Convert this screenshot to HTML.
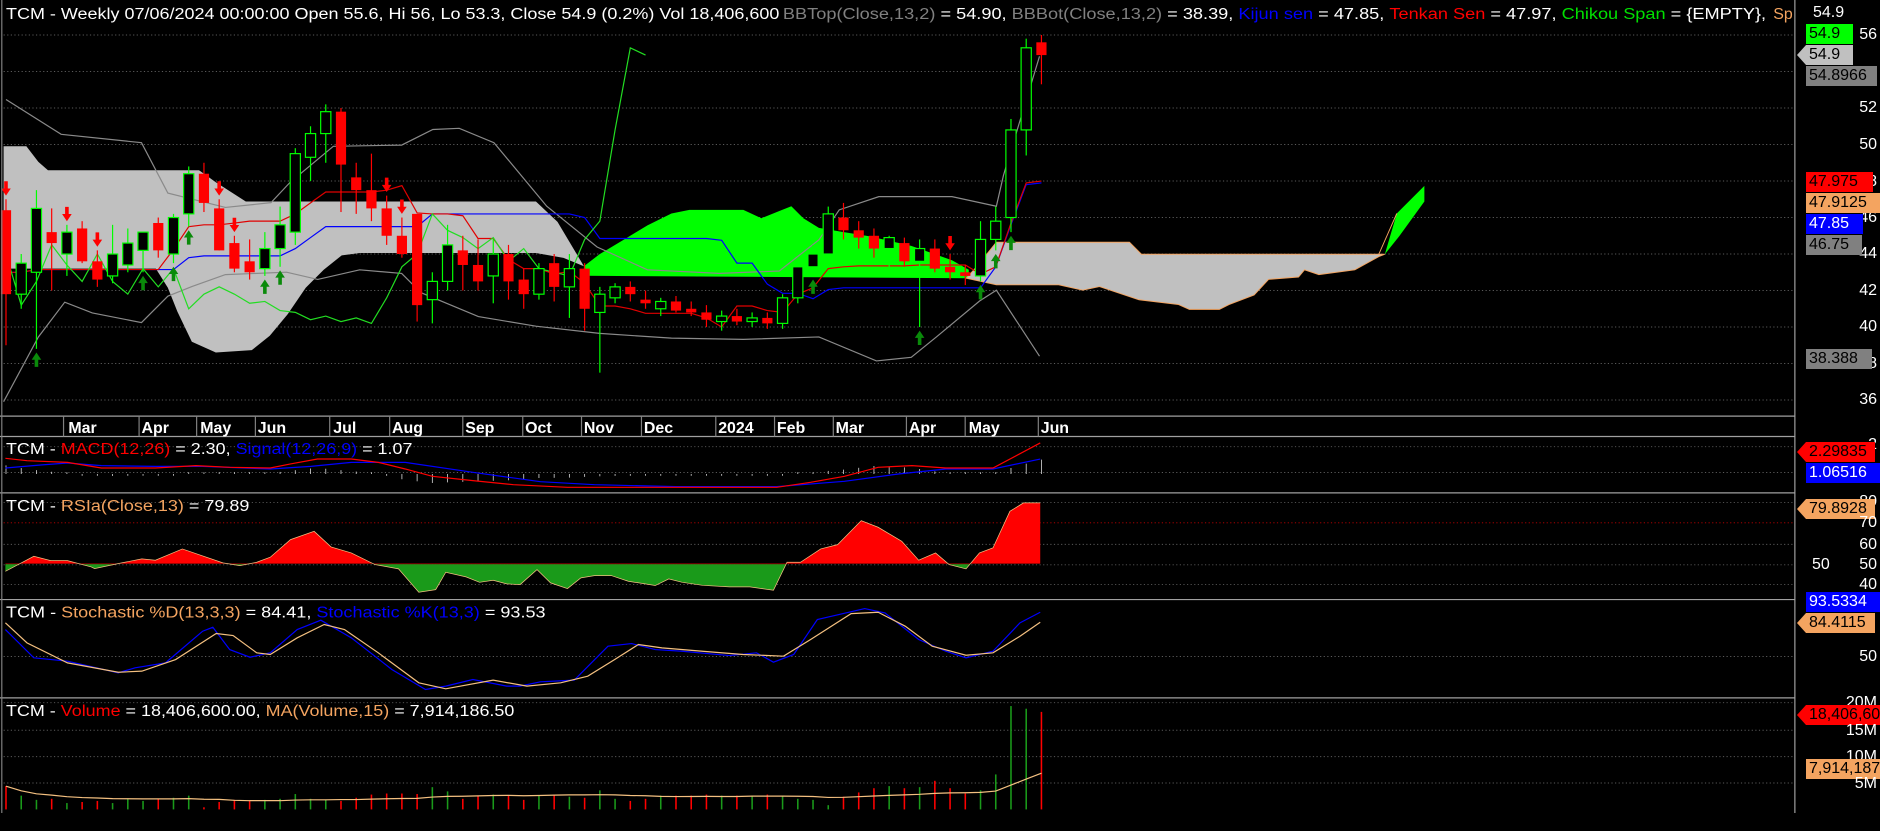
<!DOCTYPE html>
<html><head><meta charset="utf-8">
<style>
html,body{margin:0;padding:0;background:#000;width:1880px;height:831px;overflow:hidden;font-family:"Liberation Sans",Arial,sans-serif;}
#c{position:absolute;left:0;top:0;}
.ax{position:absolute;color:#fff;font-size:16px;line-height:20px;height:20px;}
.r{right:3px;text-align:right}
.bx{position:absolute;left:1806px;height:20px;line-height:20px;font-size:16px;color:#000;padding-left:3px;white-space:nowrap;overflow:hidden}
.ar{left:1797px;padding-left:12px;clip-path:polygon(0 50%,9px 0,100% 0,100% 100%,9px 100%)}
</style></head><body>
<svg id="c" width="1880" height="831" viewBox="0 0 1568 693" preserveAspectRatio="none" xmlns="http://www.w3.org/2000/svg">
<defs>
<clipPath id="up"><rect x="0" y="411" width="1497" height="59.5"/></clipPath>
<clipPath id="dn"><rect x="0" y="470.5" width="1497" height="29"/></clipPath>
<clipPath id="hd"><rect x="0" y="0" width="1497" height="30"/></clipPath>
</defs>
<g id="g"></g>
<g font-family="Liberation Sans, Arial, sans-serif" font-size="13.3" fill="#fff">
<g clip-path="url(#hd)">
<text x="5" y="16" textLength="645" lengthAdjust="spacingAndGlyphs">TCM - Weekly 07/06/2024 00:00:00 Open 55.6, Hi 56, Lo 53.3, Close 54.9 (0.2%) Vol 18,406,600</text>
<text x="653" y="16" textLength="820" lengthAdjust="spacingAndGlyphs"><tspan fill="#808080">BBTop(Close,13,2)</tspan> = 54.90, <tspan fill="#808080">BBBot(Close,13,2)</tspan> = 38.39, <tspan fill="#0000ff">Kijun sen</tspan> = 47.85, <tspan fill="#ff0000">Tenkan Sen</tspan> = 47.97, <tspan fill="#00e000">Chikou Span</tspan> = {EMPTY},</text>
<text x="1479" y="16" fill="#f4a460">Sp</text>
</g>
<g font-weight="bold">
<text x="57" y="361">Mar</text><text x="118" y="361">Apr</text><text x="167" y="361">May</text><text x="215" y="361">Jun</text>
<text x="278" y="361">Jul</text><text x="327" y="361">Aug</text><text x="388" y="361">Sep</text><text x="438" y="361">Oct</text>
<text x="487" y="361">Nov</text><text x="537" y="361">Dec</text><text x="599" y="361">2024</text><text x="648" y="361">Feb</text>
<text x="697" y="361">Mar</text><text x="758" y="361">Apr</text><text x="808" y="361">May</text><text x="868" y="361">Jun</text>
</g>
<text x="5" y="378.5" textLength="339" lengthAdjust="spacingAndGlyphs">TCM - <tspan fill="#ff0000">MACD(12,26)</tspan> = 2.30, <tspan fill="#0000ff">Signal(12,26,9)</tspan> = 1.07</text>
<text x="5" y="426" textLength="203" lengthAdjust="spacingAndGlyphs">TCM - <tspan fill="#f4a460">RSIa(Close,13)</tspan> = 79.89</text>
<text x="5" y="515" textLength="450" lengthAdjust="spacingAndGlyphs">TCM - <tspan fill="#f4a460">Stochastic %D(13,3,3)</tspan> = 84.41, <tspan fill="#0000ff">Stochastic %K(13,3)</tspan> = 93.53</text>
<text x="5" y="597" textLength="424" lengthAdjust="spacingAndGlyphs">TCM - <tspan fill="#ff0000">Volume</tspan> = 18,406,600.00, <tspan fill="#f4a460">MA(Volume,15)</tspan> = 7,914,186.50</text>
</g>
</svg>

<div class="ax" style="left:1813px;top:3px">54.9</div>
<div class="ax r" style="top:25px">56</div>
<div class="ax r" style="top:98px">52</div>
<div class="ax r" style="top:135px">50</div>
<div class="ax r" style="top:172px">48</div>
<div class="ax r" style="top:208px">46</div>
<div class="ax r" style="top:244px">44</div>
<div class="ax r" style="top:281px">42</div>
<div class="ax r" style="top:317px">40</div>
<div class="ax r" style="top:354px">38</div>
<div class="ax r" style="top:390px">36</div>
<div class="bx" style="top:24px;width:44px;background:#00ff00">54.9</div>
<div class="bx ar" style="top:45px;width:44px;background:#c0c0c0">54.9</div>
<div class="bx" style="top:66px;width:68px;background:#808080">54.8966</div>
<div class="bx" style="top:172px;width:64px;background:#ff0000">47.975</div>
<div class="bx" style="top:193px;width:72px;background:#f4a460">47.9125</div>
<div class="bx" style="top:214px;width:54px;background:#0000ff;color:#fff">47.85</div>
<div class="bx" style="top:235px;width:53px;background:#808080">46.75</div>
<div class="bx" style="top:349px;width:63px;background:#808080">38.388</div>

<div class="ax r" style="top:435px">2</div>
<div class="bx ar" style="top:442px;width:66px;background:#ff0000">2.29835</div>
<div class="bx" style="top:463px;width:71px;background:#0000ff;color:#fff">1.06516</div>

<div class="ax r" style="top:492px">80</div>
<div class="bx ar" style="top:499px;width:66px;background:#f4a460">79.8928</div>
<div class="ax r" style="top:513px">70</div>
<div class="ax r" style="top:535px">60</div>
<div class="ax" style="left:1812px;top:555px">50</div>
<div class="ax r" style="top:555px">50</div>
<div class="ax r" style="top:575px">40</div>
<div class="bx" style="top:592px;width:71px;background:#0000ff;color:#fff">93.5334</div>
<div class="bx ar" style="top:613px;width:66px;background:#f4a460">84.4115</div>
<div class="ax r" style="top:647px">50</div>
<div class="ax r" style="top:693px">20M</div>
<div class="bx ar" style="top:705px;width:74px;background:#ff0000">18,406,60</div>
<div class="ax r" style="top:721px">15M</div>
<div class="ax r" style="top:747px">10M</div>
<div class="bx" style="top:759px;width:71px;background:#f4a460">7,914,187</div>
<div class="ax r" style="top:774px">5M</div>

<script>
const D=[[46.4,47,39,41.8],[41.8,44,41,43.5],[43,47.5,38.8,46.5],[45.2,46.5,42,44.6],[44,45.6,42.8,45.2],[45.4,45.8,43.5,43.6],[43.6,44.2,42.2,42.6],[42.8,45.6,42.4,44],[43.4,45.4,43,44.6],[44.2,45,43,45.2],[45.7,46,43.8,44.2],[44,46.2,43.5,46],[46.2,48.8,45.5,48.4],[48.4,49,46.3,46.8],[46.5,47,44.2,44.2],[44.6,45,43,43.2],[43.6,44.8,42.6,43],[43.2,45.2,42.8,44.3],[44.3,46.6,43.3,45.6],[45.2,49.8,44.5,49.5],[49.3,51,48,50.6],[50.6,52.2,49,51.8],[51.8,52,46.3,48.9],[48.2,49,46.2,47.5],[47.5,49.5,45.8,46.5],[46.5,47.2,44.5,45],[45,46,43.8,44],[46.2,46.2,40.3,41.2],[41.5,43,40.2,42.5],[42.5,45.6,42,44.5],[44.2,45,42,43.4],[43.4,44.8,42,42.5],[42.8,44.8,41.3,44],[44,44.5,41.5,42.5],[42.6,43.2,41,41.8],[41.8,43.5,41.5,43.2],[43.5,44,41.4,42.2],[42.2,44,40.5,43.2],[43.2,43.5,39.8,41],[40.8,42.2,37.5,41.8],[41.6,42.4,41.3,42.2],[42.2,42.5,41.4,41.8],[41.5,42,41,41.3],[41,41.6,40.6,41.4],[41.4,41.7,40.8,40.9],[41,41.4,40.6,40.8],[40.8,41.2,40,40.4],[40.3,40.9,39.8,40.6],[40.6,41,40.1,40.3],[40.3,40.8,40,40.5],[40.5,40.8,39.9,40.2],[40.2,41.8,39.9,41.6],[41.6,43.8,41.3,43.3],[43.3,44.5,42.8,44],[44,46.6,43.6,46.2],[46,46.8,44.8,45.3],[45.3,45.8,44.3,44.9],[45,45.4,43.8,44.3],[44.3,45,42.8,44.9],[44.6,44.9,43.3,43.6],[43.6,44.8,40,44.3],[44.3,44.8,43,43.2],[43.3,44,42.6,43],[43,43.4,42.3,42.8],[42.8,45.8,42.5,44.8],[44.8,46.6,44.2,45.8],[46,51.4,45.2,50.8],[50.8,55.8,49.4,55.3],[55.6,56,53.3,54.9]];
const N=D.length,X=i=>5+i*12.7,Y=p=>29.2+(56-p)*15.22;
let s='';
const L=(x1,y1,x2,y2,c,w,da)=>`<line x1="${x1}" y1="${y1}" x2="${x2}" y2="${y2}" stroke="${c}" stroke-width="${w||1}"${da?` stroke-dasharray="${da}"`:''}/>`;
const PL=(pts,c,w)=>`<polyline fill="none" stroke="${c}" stroke-width="${w||1}" points="${pts.map(p=>p[0].toFixed(1)+','+p[1].toFixed(1)).join(' ')}"/>`;
const PG=(pts,c,st)=>`<polygon fill="${c}" ${st||''} points="${pts.map(p=>p.join(',')).join(' ')}"/>`;
// zoom-coordinate converter (crop x0=0,w=1060 displayed 1568 wide; y = y0 + Y/3)
const Z=(pts,y0)=>pts.map(p=>[p[0]*0.5634,(y0+p[1]/3)/1.2]);
const interp=(pts,x)=>{for(let k=1;k<pts.length;k++){if(x<=pts[k][0]){const a=pts[k-1],b=pts[k];const t=(x-a[0])/((b[0]-a[0])||1);return a[1]+t*(b[1]-a[1]);}}return pts[pts.length-1][1];};
// grids
for(let p=36;p<=56;p+=2)s+=L(3,Y(p),1497,Y(p),'#5a5a5a',0.8,'1 2');
[372.5,394,419,454,471,487.5,547.5,586,609,631,653].forEach(y=>s+=L(3,y,1497,y,'#5a5a5a',0.8,'1 2'));
s+=L(3,436,1497,436,'#c00000',0.8,'1 2');
// clouds
s+=PG([[3,122],[22,122],[32,135],[40,142],[166,142],[180,152],[205,168],[447,168],[465,185],[487,222],[470,215],[447,211],[300,211],[285,213],[270,225],[255,240],[240,262],[225,280],[210,292],[180,294],[160,285],[148,260],[140,240],[130,224],[3,224]],'#c0c0c0');
s+=PG([[487,222],[500,212],[520,200],[540,188],[560,178],[575,175],[620,175],[635,182],[650,176],[660,172],[670,182],[683,190],[700,193],[725,197],[760,205],[794,217],[808,225],[808,232],[487,230]],'#00ff00');
s+=PG([[806,232],[815,222],[831,202],[942,202],[952,212],[1150,212],[1155,212],[1150,214],[1130,225],[1100,229],[1088,225],[1083,231],[1058,233],[1046,246],[1025,254],[1017,258],[992,258],[983,254],[950,250],[917,239],[903,242],[883,237.5],[831,237.5]],'#c0c0c0','stroke="#f4a460" stroke-width="0.8"');
s+=PG([[1155,212],[1165,178],[1188,155],[1188,168],[1167,197]],'#00ff00');
s+=L(1150,212,1165,178,'#f4a460',0.8);
// BB
s+=PL([[5,83],[51,112],[118,119],[140,161],[188,173],[226,169],[242,152],[278,122],[335,121],[361,108],[383,107],[412,119],[456,172],[498,206],[540,225],[600,228],[650,226],[683,200],[700,175],[733,164],[794,164],[831,172],[837,146],[850,103],[867,47]],'#8a8a8a');
s+=PL([[3,335],[32,281],[54,252],[77,261],[118,269],[140,247],[160,239],[188,229],[239,227],[265,233],[300,225],[335,228],[351,244],[399,264],[447,272],[500,278],[560,282],[620,283],[683,281],[731,301],[760,298],[781,281],[817,251],[831,242],[867,297]],'#8a8a8a');
// tenkan/kijun/chikou
const mid=(i,n)=>{let h=-1e9,l=1e9;for(let j=Math.max(0,i-n+1);j<=i;j++){h=Math.max(h,D[j][1]);l=Math.min(l,D[j][2]);}return (h+l)/2;};
let tk=[],kj=[],ck=[];
for(let i=0;i<N;i++){tk.push([X(i),Y(mid(i,9))]);kj.push([X(i),Y(mid(i,26))]);if(i>=26)ck.push([X(i-26),Y(D[i][3])]);}
s+=PL(kj,'#0000ff');s+=PL(tk,'#e00000');s+=PL(ck,'#22dd22');
// candles
D.forEach((d,i)=>{const x=X(i),up=d[3]>=d[0],c=up?'#00ff00':'#ff0000';
 s+=L(x,Y(d[1]),x,Y(d[2]),c,1);
 const t=Y(Math.max(d[0],d[3])),b=Y(Math.min(d[0],d[3]));
 s+=`<rect x="${x-4.25}" y="${t}" width="8.5" height="${Math.max(1.5,b-t)}" fill="${up?'#000':'#ff0000'}" stroke="${c}" stroke-width="${up?1:0}"/>`;});
// arrows
const ua=(i)=>{const x=X(i),y=Y(D[i][2])+3;s+=PG([[x,y],[x-4,y+6],[x-1.5,y+6],[x-1.5,y+12],[x+1.5,y+12],[x+1.5,y+6],[x+4,y+6]],'#0a8a0a');};
const da=(i)=>{const x=X(i),y=Y(D[i][1])-3;s+=PG([[x,y],[x-4,y-6],[x-1.5,y-6],[x-1.5,y-12],[x+1.5,y-12],[x+1.5,y-6],[x+4,y-6]],'#ff0000');};
[2,9,11,12,17,18,53,60,64,65,66].forEach(ua);[0,4,6,14,15,25,26,62].forEach(da);
// dividers
[347,364,411,500,582].forEach(y=>s+=L(0,y,1497,y,'#a0a0a0',1));
s+=L(1497,0,1497,678,'#a0a0a0',1);s+=L(1.5,0,1.5,678,'#808080',1);
[53,116,164,213,275,325,386,436,485,535,597,646,695,756,805,866].forEach(x=>s+=L(x,347,x,364,'#808080',1));
// MACD (hand traced)
const mR=Z([[8,68],[40,75],[100,80],[150,97],[230,97],[290,90],[340,95],[400,97],[430,85],[470,70],[520,70],[560,80],[600,100],[640,122],[700,135],[760,147],[840,155],[1000,155],[1150,155],[1200,140],[1250,122],[1300,95],[1350,90],[1400,97],[1470,97],[1540,22]],436);
const mB=Z([[8,97],[60,88],[100,82],[150,90],[230,92],[300,92],[400,100],[460,92],[520,80],[600,80],[700,110],[800,138],[880,147],[1000,153],[1150,153],[1250,137],[1330,115],[1400,100],[1470,100],[1540,70]],436);
const z0=(436+115/3)/1.2;
for(let i=0;i<N;i++){const x=X(i);let h=(interp(mB,x)-interp(mR,x))*0.9;if(Math.abs(h)<1.5)h=h<0?-1.5:1.5;s+=L(x,z0,x,z0-h,'#d0d0d0',0.7);}
s+=PL(mB,'#0000ff');s+=PL(mR,'#ff0000');
// RSI (hand traced)
const rP=Z([[8,245],[50,200],[75,213],[100,213],[135,232],[140,237],[180,220],[210,208],[230,212],[270,178],[330,220],[355,228],[380,218],[400,203],[430,150],[465,125],[490,172],[520,190],[555,225],[590,238],[620,308],[645,300],[660,248],[690,262],[710,278],[730,272],[750,283],[770,285],[795,240],[815,280],[840,297],[860,265],[880,258],[905,258],[930,275],[970,288],[990,268],[1010,278],[1040,287],[1080,292],[1110,292],[1145,302],[1165,218],[1185,218],[1215,178],[1240,165],[1275,93],[1300,113],[1335,155],[1360,212],[1385,190],[1405,225],[1430,238],[1450,190],[1470,175],[1495,65],[1515,40],[1540,40]],490);
const base=(490+222/3)/1.2;
const rp=[[rP[0][0],base]].concat(rP,[[rP[rP.length-1][0],base]]);
const rps=rp.map(p=>p[0].toFixed(1)+','+p[1].toFixed(1)).join(' ');
s+=`<polygon clip-path="url(#up)" fill="#ff0000" points="${rps}"/><polygon clip-path="url(#dn)" fill="#1a9a1a" points="${rps}"/>`;
s+=PL(rP,'#f4c080',0.6);
// Stoch (hand traced)
const sK=Z([[8,420],[50,505],[100,515],[175,550],[200,535],[245,520],[300,425],[315,413],[340,480],[370,503],[400,490],[440,420],[475,392],[520,445],[580,540],[630,600],[660,590],[700,570],[750,590],[770,590],[800,577],[850,572],[900,470],[935,462],[970,480],[1010,485],[1080,498],[1120,490],[1145,518],[1175,495],[1210,390],[1280,357],[1310,370],[1360,450],[1400,485],[1430,505],[1470,485],[1510,400],[1540,368]],490);
const sD=Z([[8,400],[40,460],[100,520],[175,548],[210,545],[260,510],[320,432],[345,438],[380,490],[400,495],[440,445],[480,405],[510,420],[560,490],[620,580],[660,598],[730,572],[780,590],[830,580],[870,560],[910,510],[945,465],[980,475],[1040,485],[1100,495],[1160,500],[1200,450],[1260,372],[1300,368],[1340,410],[1380,470],[1430,497],[1470,490],[1510,440],[1540,398]],490);
s+=PL(sK,'#0000ff');s+=PL(sD,'#f4c080');
// Volume
let V=[4.4,2.6,1.8,2.0,1.2,1.4,1.6,1.2,2.0,1.6,2.0,2.2,2.6,0.4,1.4,1.8,1.6,1.8,2.0,2.9,2.0,1.8,1.6,2.2,2.8,3.0,3.0,2.9,4.2,3.4,2.0,2.6,2.8,2.6,1.8,2.6,2.8,2.4,2.2,3.6,2.0,1.6,2.0,2.6,2.6,2.6,2.8,2.6,2.6,2.6,2.8,2.6,2.0,1.8,0.8,2.4,3.2,4.0,4.4,4.0,4.2,5.4,4.0,3.0,3.6,6.6,19.5,19.0,18.4];
while(V.length<N)V.unshift(2);V=V.slice(V.length-N);
const vy=m=>675-m*4.42;
V.forEach((v,i)=>{const up=D[i][3]>=D[i][0];s+=L(X(i),675,X(i),vy(v),up?'#1a9a1a':'#ff0000',1.3);});
const sma=(a,n)=>a.map((_,i)=>{let t=0,c=0;for(let j=Math.max(0,i-n+1);j<=i;j++){t+=a[j];c++;}return t/c;});
const ma=sma(V,15);s+=PL(ma.map((v,i)=>[X(i),vy(v)]),'#f4c080');
document.getElementById('g').innerHTML=s;
</script>
</body></html>
